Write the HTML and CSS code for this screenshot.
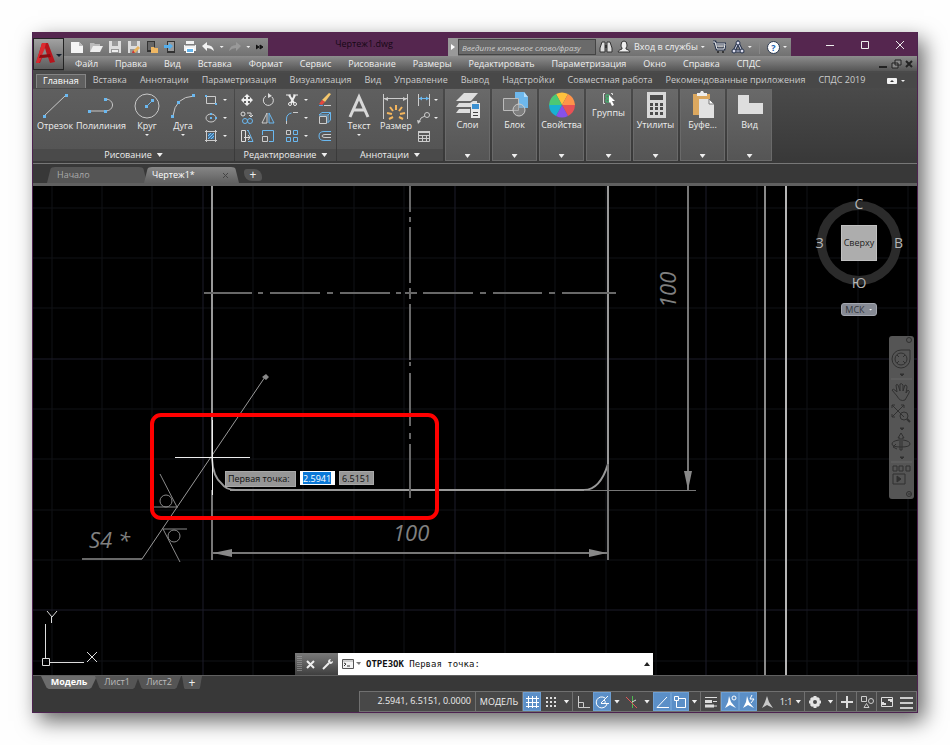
FILE: index.html
```html
<!DOCTYPE html>
<html lang="ru">
<head>
<meta charset="utf-8">
<title>Чертеж1.dwg</title>
<link rel="stylesheet" href="styles.css">
</head>
<body>
<div class="window">
  <header class="top">
    <button class="app-btn" aria-label="Меню приложения">
      <svg width="29" height="29" viewBox="0 0 29 29"><path d="M2 23 8 3h6l7 19-5 1-2-6-6 1-2 5z" fill="#b8141c"/><path d="M8 3h4l-3 12-4 8H2z" fill="#dc2a30"/><path d="M11 8 8 15h5z" fill="#8a8a8a"/><path d="m6 15 10-1 1 3-12 1z" fill="#8c0d12"/><path d="M22 14h6l-3 3z" fill="#16202e"/></svg>
    </button>
    <div class="titlebar">
      <div class="quick">
        <button aria-label="Создать"><svg width="16" height="14" viewBox="0 0 16 14"><path d="M2 2h8l4 4v7H2z" fill="#f5f5f5"/><path d="M10 2v4h4" fill="#bbb"/></svg></button>
        <button aria-label="Открыть"><svg width="16" height="14" viewBox="0 0 16 14"><path d="M2 12V3h4l1 1h5v2" fill="#bbb"/><path d="M2 12 5 6h10l-3 6z" fill="#eee"/></svg></button>
        <button aria-label="Сохранить"><svg width="16" height="14" viewBox="0 0 16 14"><path d="M2 1h12v12H2z" fill="#ddd"/><path d="M5 1h6v5H5zM4 9h8v4H4z" fill="#999"/><path d="M5 10h6v2H5z" fill="#eee"/></svg></button>
        <button aria-label="Сохранить как"><svg width="16" height="14" viewBox="0 0 16 14"><path d="M2 1h12v12H2z" fill="#ddd"/><path d="M5 1h6v5H5zM4 9h8v4H4z" fill="#999"/><path d="m7 11 5-5 2 2-5 5H7z" fill="#e9b45c"/><path d="m7 10 2 3H6z" fill="#c33"/></svg></button>
        <button aria-label="Открыть с устройства"><svg width="16" height="14" viewBox="0 0 16 14"><path d="M3 1h8v11H3z" fill="#333"/><path d="M4 2h6v8H4z" fill="#666"/><path d="M7 13V7h3l1 1h3v5z" fill="#efb763"/></svg></button>
        <button aria-label="Сохранить на устройство"><svg width="16" height="14" viewBox="0 0 16 14"><path d="M4 1h8v12H4z" fill="#333"/><path d="M5 2h6v9H5z" fill="#999"/><path d="M1 5h5V3l4 3-4 4V8H1z" fill="#55b0ee"/></svg></button>
        <button aria-label="Печать"><svg width="16" height="14" viewBox="0 0 16 14"><path d="M4 1h8v3H4zM2 5h12v6H2z" fill="#f1f1f1"/><path d="M4 8h8v5H4z" fill="#fff"/><path d="M5 9h6v3H5z" fill="#64b4ea"/><path d="M3 5h10" stroke="#777"/></svg></button>
        <button aria-label="Отменить"><svg width="16" height="14" viewBox="0 0 16 14"><path d="m2 6 5-4v3q6 0 7 6-3-3-7-3v3z" fill="#f2f2f2"/></svg></button>
        <button class="narrow" aria-label="Список отмены"><i class="caret"></i></button>
        <button aria-label="Повторить"><svg width="16" height="14" viewBox="0 0 16 14"><path d="M14 6 9 2v3Q3 5 2 11q3-3 7-3v3z" fill="#999"/></svg></button>
        <button class="narrow" aria-label="Список повтора"><i class="caret"></i></button>
        <button class="narrow" aria-label="Ещё"><svg width="8" height="8" viewBox="0 0 8 8"><path d="m0 2 3 2-3 2zM4 2l3 2-3 2z" fill="#111" stroke="#111"/></svg></button>
      </div>
      <h1>Чертеж1.dwg</h1>
      <div class="info">
        <button class="expand" aria-label="Развернуть"><svg width="6" height="8" viewBox="0 0 6 8"><path d="m1 1 4 3-4 3z" fill="#fff"/></svg></button>
        <input class="search" type="text" placeholder="Введите ключевое слово/фразу" aria-label="Поиск">
        <button class="tool" aria-label="Найти"><svg width="14" height="14" viewBox="0 0 14 14"><path d="M3 2h3v10H1V8zM8 2h3l2 6v4H8z" fill="#ddd" stroke="#333"/><path d="M6 5h2v3H6z" fill="#333"/></svg></button>
        <button class="login"><svg width="14" height="14" viewBox="0 0 14 14"><path d="M7 1q3 0 3 4 0 2-1 3v1q4 1 4 3H1q0-2 4-3V8Q4 7 4 5q0-4 3-4z" fill="#eee" stroke="#333"/></svg><span>Вход в службы</span><i class="caret"></i></button>
        <button class="tool" aria-label="Корзина"><svg width="14" height="14" viewBox="0 0 14 14"><path d="M1 2h2l2 7h7l1-5H4" fill="none" stroke="#26334c" stroke-width="3"/><path d="M1 2h2l2 7h7l1-5H4M4 6h8" fill="none" stroke="#eee"/><circle cx="6" cy="12" r="1" fill="#222"/><circle cx="11" cy="12" r="1" fill="#222"/></svg></button>
        <button class="login" aria-label="Приложения"><svg width="14" height="14" viewBox="0 0 14 14"><path d="M7 3 3 11h8z" fill="none" stroke="#26334c" stroke-width="3"/><path d="M7 3 3 11h8z" fill="none" stroke="#dde"/><circle cx="7" cy="3" r="2" fill="#dde" stroke="#26334c"/><circle cx="3" cy="11" r="2" fill="#dde" stroke="#26334c"/><circle cx="11" cy="11" r="2" fill="#dde" stroke="#26334c"/></svg><i class="caret"></i></button>
        <button class="login help" aria-label="Справка"><span class="q">?</span><i class="caret"></i></button>
      </div>
      <div class="winbtns">
        <button aria-label="Свернуть"><svg width="10" height="10" viewBox="0 0 10 10"><path d="M1 5.500h8" stroke="#eee"/></svg></button>
        <button aria-label="Развернуть окно"><svg width="10" height="10" viewBox="0 0 10 10"><path d="M1.500 1.500h7v7h-7z" fill="none" stroke="#eee"/></svg></button>
        <button aria-label="Закрыть"><svg width="10" height="10" viewBox="0 0 10 10"><path d="m1 1 8 8M9 1 1 9" stroke="#eee"/></svg></button>
      </div>
    </div>
    <nav class="menubar">
      <a href="#">Файл</a><a href="#">Правка</a><a href="#">Вид</a><a href="#">Вставка</a><a href="#">Формат</a><a href="#">Сервис</a><a href="#">Рисование</a><a href="#">Размеры</a><a href="#">Редактировать</a><a href="#">Параметризация</a><a href="#">Окно</a><a href="#">Справка</a><a href="#">СПДС</a>
      <div class="docbtns">
        <svg width="34" height="10" viewBox="0 0 34 10"><path d="M0 8h8" stroke="#222" stroke-width="2"/><path d="M16 1h6v5h-6zM13 4h6v5h-6z" fill="#888" stroke="#222"/><path d="m27 2 6 6M33 2l-6 6" stroke="#222" stroke-width="2"/></svg>
      </div>
    </nav>
  </header>

  <nav class="tabs">
    <a href="#" class="active">Главная</a><a href="#">Вставка</a><a href="#">Аннотации</a><a href="#">Параметризация</a><a href="#">Визуализация</a><a href="#">Вид</a><a href="#">Управление</a><a href="#">Вывод</a><a href="#">Надстройки</a><a href="#">Совместная работа</a><a href="#">Рекомендованные приложения</a><a href="#">СПДС 2019</a>
    <button class="ribbon-toggle" aria-label="Свернуть ленту"><svg width="18" height="8" viewBox="0 0 18 8"><rect y="1" width="10" height="6" rx="1" fill="#f2f2f2"/><path d="m3 5 2-2 2 2z" fill="#333"/><path d="M14 3h4l-2 2z" fill="#eee"/></svg></button>
  </nav>

  <section class="ribbon">
    <div class="panel">
      <div class="tools">
        <button class="big w40"><svg width="28" height="28" viewBox="0 0 28 28"><path d="M3 24 25 3" stroke="#c8c8c8"/><path d="M2 23h3v3H2zM24 2h3v3h-3z" fill="#6ab8f0"/></svg><span>Отрезок</span></button>
        <button class="big w52"><svg width="28" height="28" viewBox="0 0 28 28"><path d="M3 19h15c10 0 10-12 0-12" fill="none" stroke="#c8c8c8"/><path d="M1 18h3v3H1zM17 18h3v3h-3zM17 6h3v3h-3z" fill="#6ab8f0"/></svg><span>Полилиния</span></button>
        <button class="big w40"><svg width="28" height="28" viewBox="0 0 28 28"><circle cx="14" cy="14" r="12" fill="none" stroke="#c8c8c8"/><path d="m14 14 6-6" stroke="#6ab8f0"/><path d="M12 13h3v3h-3zM18 7h3v3h-3z" fill="#6ab8f0"/></svg><span>Круг</span><i class="caret"></i></button>
        <button class="big w32"><svg width="28" height="28" viewBox="0 0 28 28"><path d="M4 24Q6 5 25 4" fill="none" stroke="#c8c8c8"/><path d="M2 23h3v3H2zM8 9h3v3H8zM23 2h3v3h-3z" fill="#6ab8f0"/></svg><span>Дуга</span><i class="caret"></i></button>
        <div class="small draw-grid">
          <button aria-label="Прямоугольник"><svg width="16" height="16" viewBox="0 0 16 16"><path d="M3.500 4.500h9v7h-9z" fill="none" stroke="#ccc"/><path d="M2 3h2v2H2zM12 11h2v2h-2z" fill="#6ab8f0"/></svg></button><i class="caret"></i>
          <button aria-label="Эллипс"><svg width="16" height="16" viewBox="0 0 16 16"><ellipse cx="8" cy="8" rx="5" ry="4" fill="none" stroke="#ccc"/><path d="M7 7h2v2H7zM12 7h2v2h-2zM7 3h2v2H7z" fill="#6ab8f0"/></svg></button><i class="caret"></i>
          <button aria-label="Штриховка"><svg width="16" height="16" viewBox="0 0 16 16"><path d="M3.500 2v12M12.500 2v12M2 3.500h12M2 12.500h12" stroke="#ccc"/><path d="M5 5h6v6H5z" fill="#3f78a8"/><path d="m5 8 3-3M5 11l6-6M8 11l3-3" stroke="#7cc0f2"/></svg></button><i class="caret"></i>
        </div>
      </div>
      <button class="ptitle">Рисование<i class="caret wide"></i></button>
    </div>
    <div class="panel">
      <div class="tools">
        <div class="small edit-grid">
          <button aria-label="Перенести"><svg width="16" height="16" viewBox="0 0 16 16"><path d="M8 4v8M4 8h8" stroke="#eee" stroke-width="2"/><path d="m8 2 3 3H5zM8 14l3-3H5zM2 8l3-3v6zM14 8l-3-3v6z" fill="#eee"/></svg></button>
          <button aria-label="Повернуть"><svg width="16" height="16" viewBox="0 0 16 16"><path d="M6 4a5 5 0 1 0 6 1" fill="none" stroke="#ddd"/><path d="M8 1v5l4-2z" fill="#ddd"/></svg></button>
          <button aria-label="Обрезать"><svg width="16" height="16" viewBox="0 0 16 16"><path d="M2 3h12" stroke="#eee" stroke-dasharray="5 2"/><path d="m5 3 5 8M11 3l-4 8" stroke="#eee" stroke-width="2"/><circle cx="6" cy="12" r="1.500" fill="none" stroke="#eee"/><circle cx="11" cy="12" r="1.500" fill="none" stroke="#eee"/></svg></button><i class="caret"></i>
          <button aria-label="Стереть"><svg width="16" height="16" viewBox="0 0 16 16"><path d="m5 8 7-7 2 1-6 8z" fill="#f5c76c"/><path d="m5 8 3 2-3 3-3-1z" fill="#e4483f"/><path d="M2 13.500h4" stroke="#4fa0e0"/><path d="M7 13.500h7" stroke="#ccc"/></svg></button>
          <button aria-label="Копировать"><svg width="16" height="16" viewBox="0 0 16 16"><circle cx="4" cy="4" r="2" fill="none" stroke="#ddd"/><path d="M8 3h4v3M10 5l2 2 2-2" fill="none" stroke="#ddd"/><circle cx="6" cy="11" r="2.500" fill="none" stroke="#6ab8f0"/><circle cx="11" cy="11" r="2.500" fill="none" stroke="#6ab8f0"/></svg></button>
          <button aria-label="Зеркало"><svg width="16" height="16" viewBox="0 0 16 16"><path d="M7 3v10H2z" fill="none" stroke="#ccc"/><path d="M9 3v10h5z" fill="none" stroke="#6ab8f0"/></svg></button>
          <button aria-label="Сопряжение"><svg width="16" height="16" viewBox="0 0 16 16"><path d="M2.500 14V9q0-5 5-6" fill="none" stroke="#6ab8f0"/><path d="M9 2.500h5M2.500 11v3" stroke="#ccc"/></svg></button><i class="caret"></i>
          <button aria-label="Расчленить"><svg width="16" height="16" viewBox="0 0 16 16"><path d="M2.500 6.500h7v7h-7z" fill="none" stroke="#ccc"/><path d="m2 5 3-2.500h8.500V10L11 12.500M11 5l2.500-2.500M2 5h9v8" fill="none" stroke="#6ab8f0"/></svg></button>
          <button aria-label="Растянуть"><svg width="16" height="16" viewBox="0 0 16 16"><path d="M2.500 2.500h4v11h-4z" fill="none" stroke="#ddd"/><path d="m8 3 1-1 5 11.500H9" fill="none" stroke="#6ab8f0"/><path d="M5 9.500h6M9 7l2 2.500L9 12" fill="none" stroke="#ddd"/></svg></button>
          <button aria-label="Масштаб"><svg width="16" height="16" viewBox="0 0 16 16"><path d="M2.500 7V2.500h11v11H9" fill="none" stroke="#6ab8f0"/><path d="M2.500 8.500h5v5h-5z" fill="none" stroke="#ccc"/></svg></button>
          <button aria-label="Массив"><svg width="16" height="16" viewBox="0 0 16 16"><path d="M2.500 2.500h4v4h-4z" fill="none" stroke="#ccc"/><path d="M9.500 2.500h4v4h-4zM2.500 9.500h4v4h-4zM9.500 9.500h4v4h-4z" fill="none" stroke="#6ab8f0"/></svg></button><i class="caret"></i>
          <button aria-label="Подобие"><svg width="16" height="16" viewBox="0 0 16 16"><path d="M14 3.500H7q-5 0-5 4.500t5 4.500h7" fill="none" stroke="#6ab8f0"/><path d="M14 6.500H8q-3 0-3 1.500t3 1.500h6" fill="none" stroke="#ccc"/></svg></button>
        </div>
      </div>
      <button class="ptitle">Редактирование<i class="caret wide"></i></button>
    </div>
    <div class="panel">
      <div class="tools">
        <button class="big w40"><svg width="28" height="28" viewBox="0 0 28 28"><path d="m5 25 9-20 9 20M9 18h10" fill="none" stroke="#d8d8d8" stroke-width="3"/></svg><span>Текст</span><i class="caret"></i></button>
        <button class="big w34"><svg width="28" height="28" viewBox="0 0 28 28"><path d="M1.500 2v25M25.500 2v25M2 6.500h24" stroke="#ccc"/><path d="m2 7 4-2v4zM25 7l-4-2v4z" fill="#ccc"/><path d="M14 13v5M8 15l3 4M20 15l-3 4M5 21l5 1M23 21l-5 1M7 27l4-2M21 27l-4-2" stroke="#f3b55d" stroke-width="2"/></svg><span>Размер</span></button>
        <div class="small anno-grid">
          <button aria-label="Линейный размер"><svg width="16" height="16" viewBox="0 0 16 16"><path d="M2.500 2v12M13.500 2v12" stroke="#ccc"/><path d="M3 6.500h10" stroke="#6ab8f0"/><path d="m3 6.500 3-2v4zM13 6.500l-3-2v4z" fill="#6ab8f0"/></svg></button><i class="caret"></i>
          <button aria-label="Выноска"><svg width="16" height="16" viewBox="0 0 16 16"><path d="M3 12q1-5 6-6" fill="none" stroke="#ccc"/><circle cx="11" cy="5" r="2.500" fill="none" stroke="#ccc"/><path d="m1 10 4 1-3 3z" fill="#ccc"/></svg></button><i class="caret"></i>
          <button aria-label="Таблица"><svg width="16" height="16" viewBox="0 0 16 16"><path d="M2.500 3.500h11v10h-11z" fill="none" stroke="#ccc"/><path d="M2 4h12" stroke="#ccc" stroke-width="2"/><path d="M2 7.500h12M2 10.500h12M6.500 7v7M10.500 7v7" stroke="#ccc"/></svg></button>
        </div>
      </div>
      <button class="ptitle">Аннотации<i class="caret wide"></i></button>
    </div>
    <button class="fold"><svg width="28" height="28" viewBox="0 0 28 28"><path d="m2 10 8-8h14l-7 8zM2 16l3-4h11l3-2h4v2l-5 4zM2 22l3-4h11v4z" fill="#dedede"/><path d="M17 12h9v15h-9z" fill="#e8e8e8"/><path d="M18 13h7v5h-7z" fill="#3c90d0"/><path d="M19 21.500h5M19 24.500h5" stroke="#444"/></svg><span>Слои</span><i class="caret wide"></i></button>
    <button class="fold"><svg width="28" height="28" viewBox="0 0 28 28"><path d="M14 1h9l4 5v11H14z" fill="#6db7ec"/><path d="M23 1v5h4" fill="#b4dcf8"/><path d="M2.500 7.500h15v12h-15z" fill="#777" stroke="#bbb"/><circle cx="18" cy="19" r="6" fill="#999" fill-opacity=".5" stroke="#ccc"/></svg><span>Блок</span><i class="caret wide"></i></button>
    <button class="fold"><svg width="28" height="28" viewBox="0 0 28 28"><path d="M14 14 8 3a13 13 0 0 1 12 0z" fill="#ffc13d"/><path d="M14 14 20 3a13 13 0 0 1 7 11z" fill="#ff934a"/><path d="M14 14h13a13 13 0 0 1-7 11z" fill="#e95155"/><path d="m14 14 6 11a13 13 0 0 1-12 0z" fill="#8751e8"/><path d="M14 14 8 25A13 13 0 0 1 1 14z" fill="#18b1d2"/><path d="M14 14H1A13 13 0 0 1 8 3z" fill="#4cc875"/></svg><span>Свойства</span><i class="caret wide"></i></button>
    <button class="fold"><svg width="16" height="16" viewBox="0 0 16 16"><path d="M4 2.500H2.500v10H4M10 2.500h1.500V4" fill="none" stroke="#ddd"/><path d="M5 4h3v3H5zM5 8h3v3H5z" fill="none" stroke="#3fbf70"/><path d="m8 4 6 6h-3l2 4-2 1-2-4-1 1z" fill="#fff"/></svg><span>Группы</span><i class="caret wide"></i></button>
    <button class="fold"><svg width="28" height="28" viewBox="0 0 28 28"><path d="M5 1h19v26H5z" fill="#d9d9d9"/><path d="M8 4h13v5H8zM8 12h3v3H8zM13 12h3v3h-3zM18 12h3v3h-3zM8 16h3v3H8zM13 16h3v3h-3zM18 16h3v3h-3zM8 21h3v3H8zM13 21h3v3h-3zM18 21h3v3h-3z" fill="#4b4b4b"/></svg><span>Утилиты</span><i class="caret wide"></i></button>
    <button class="fold"><svg width="28" height="28" viewBox="0 0 28 28"><path d="M4 3h17v21H4z" fill="#dca85f"/><path d="M8 5V2h3l1-2h2l1 2h3v3z" fill="#eee"/><path d="M10 8h10l5 5v14H10z" fill="#e2e2e2"/><path d="M20 8v5h5z" fill="#fff" stroke="#777"/></svg><span>Буфе...</span><i class="caret wide"></i></button>
    <button class="fold"><svg width="28" height="28" viewBox="0 0 28 28"><path d="M2 4h11v8h14v11H2z" fill="#dedede"/></svg><span>Вид</span><i class="caret wide"></i></button>
  </section>

  <nav class="files">
    <a href="#" class="file">Начало</a>
    <a href="#" class="file current">Чертеж1*<svg width="7" height="7" viewBox="0 0 7 7"><path d="m1 1 5 5M6 1 1 6" stroke="#444"/></svg></a>
    <button class="plus" aria-label="Новый чертеж">+</button>
  </nav>

  <main class="canvas">
    <svg class="drawing" width="100%" height="100%" aria-hidden="true">
      <g transform="translate(-33 -186)" fill="none">
        <path d="M52 186v489M102 186v489M152 186v489M253 186v489M303 186v489M354 186v489M404 186v489M505 186v489M555 186v489M606 186v489M656 186v489M757 186v489M807 186v489M858 186v489M908 186v489M33 208h884M33 258h884M33 308h884M33 409h884M33 459h884M33 510h884M33 560h884M33 661h884" stroke="#111317"/>
        <path d="M203 186v489M455 186v489M706 186v489M33 359h884M33 610h884" stroke="#1c1c2a"/>
        <g stroke="#999" stroke-width="2">
          <path d="M212 186v273q1 18 10 25 4 6 14 6M230 490h354q16 0 24-26V186"/>
        </g>
        <g stroke="#777" stroke-width="2">
          <path d="M212 490v70M608 464v96M212 553h396M688 186v304"/>
          <path d="M584 490.500h112" stroke-width="1"/>
          <path d="M765 186v489" stroke="#8a8a8a"/>
          <path d="M786 186v489" stroke="#b5b5b5"/>
        </g>
        <g stroke="#686868" stroke-width="2">
          <path d="M410 186v26M410 217v5M410 227v56M410 288v11M410 304v56M410 362v4M410 373v53M410 433v6M410 444v54"/>
          <path d="M204 293h48M258 293h5M270 293h50M327 293h6M340 293h50M396 293h5M405 293h12M423 293h50M480 293h6M493 293h49M549 293h6M562 293h54"/>
          <path d="M142 559 265 377" stroke-width="1" stroke="#999"/>
          <path d="M82 559h60"/>
        </g>
        <g stroke="#8a8a8a">
          <path d="m160 474 17 33M154 507h24M163 529h24M163 529l17 33"/>
          <circle cx="166" cy="501" r="6"/><circle cx="174" cy="536" r="6"/>
        </g>
        <path d="m262 377 4-3 3 3-3 3zM213 553l19-4v8zM607 553l-18-4v8zM688 490l-4-19h8z" fill="#888"/>
        <text class="dim" x="393" y="541">100</text>
        <text class="dim" transform="translate(676 308) rotate(-90)">100</text>
        <text class="dim" x="89" y="548">S4 *</text>
        <path d="M175 457.500h75M212.500 420v75" stroke="#eee"/>
        <rect x="152" y="415" width="285" height="103" rx="9" stroke="#f00" stroke-width="4"/>
        <path d="M45.500 624v34M49 662.500h35M42.500 658.500h7v7h-7z" stroke="#ddd"/>
        <path d="m47 611 5 6 5-6M51.500 617v6M87 652l10 10M97 652l-10 10" stroke="#ddd"/>
      </g>
    </svg>

    <div class="prompt">
      <label for="px">Первая точка:</label>
      <input id="px" class="x" type="text" value="2.5941">
      <input class="y" type="text" value="6.5151" aria-label="Y">
    </div>

    <div class="side">
      <div class="compass">
        <span class="n">С</span><span class="w">З</span><button class="cube">Сверху</button><span class="e">В</span><span class="s">Ю</span>
      </div>
      <button class="ucs">МСК<i class="caret"></i></button>
    </div>
    <button class="navbar" aria-label="Панель навигации">
      <svg width="25" height="163" viewBox="0 0 25 163" fill="none" stroke="#303030"><circle cx="20" cy="4" r="2.500"/><path d="M12 14h9v9a9 9 0 1 1-9-9z"/><circle cx="12" cy="23" r="6"/><path d="m8 19 2 2M16 19l-2 2M8 27l2-2M16 27l-2-2"/><path d="M11 38h4l-2 2z" fill="#303030"/><path d="M2 43h21" stroke="#666"/><path d="M8 60 3 54q1-2 4 1l1 1-1-7q2-2 3 3l1 3V48q2-1 3 1v6l2-6q2 0 2 2l-1 6 2-3q2 1 1 3l-4 7q-5 2-8-4z"/><path d="m3 69 12 12M15 69 3 81M3 72v-3h3M12 69h3v3M3 78v3h3"/><circle cx="15" cy="80" r="4"/><path d="m18 83 3 3" stroke-width="2"/><path d="M11 92h4l-2 2z" fill="#303030"/><path d="M11 114v-12H9l3-5 3 5h-2v12z"/><path d="M10 104q-7 1-7 4t9 3 9-3-7-4M7 108l-3 3 4 2"/><path d="M11 121h4l-2 2z" fill="#303030"/><path d="M2 126h21" stroke="#666"/><path d="M4 130h4v5H4zM10 130h4v5h-4zM17 130h4v5h-4zM4 138h12v10H4z"/><path d="m8 140 4 3-4 3z" fill="#303030"/><circle cx="20" cy="158" r="2.500"/><path d="M19 158h3"/></svg>
    </button>

    <div class="command">
      <div class="grip"></div>
      <button aria-label="Закрыть"><svg width="9" height="9" viewBox="0 0 9 9"><path d="m1 1 7 7M8 1 1 8" stroke="#eee" stroke-width="2"/></svg></button>
      <button aria-label="Настройка"><svg width="12" height="12" viewBox="0 0 12 12"><path d="m1 11 6-6" stroke="#eee" stroke-width="2"/><path d="M9 1Q6 1 6 4l2 2q3 0 3-3L9 4 8 3z" fill="#eee"/></svg></button>
      <div class="cmdline">
        <svg width="20" height="12" viewBox="0 0 20 12"><path d="M1.500 1.500h11v9h-11z" fill="#f4f4f4" stroke="#555"/><path d="M2 3h10" stroke="#aaa"/><path d="m3 5 2 1-2 2M6 8h3" fill="none" stroke="#333"/><path d="M15 4h5l-2 3z" fill="#777"/></svg>
        <p><b>ОТРЕЗОК</b> Первая точка:</p>
        <svg width="6" height="4" viewBox="0 0 6 4"><path d="M0 4h6L3 0z" fill="#222"/></svg>
      </div>
    </div>
  </main>

  <footer>
    <nav class="sheets">
      <a href="#" class="sheet current">Модель</a><a href="#" class="sheet">Лист1</a><a href="#" class="sheet">Лист2</a><button class="sheet add" aria-label="Новый лист">+</button>
    </nav>
    <div class="status">
      <span class="coords">2.5941, 6.5151, 0.0000</span>
      <button class="model">МОДЕЛЬ</button>
      <button class="on" aria-label="Сетка"><svg width="16" height="16" viewBox="0 0 16 16"><path d="M4.500 2v12M8.500 2v12M12.500 2v12M2 4.500h13M2 8.500h13M2 12.500h13" stroke="#fff"/></svg></button>
      <button class="roomy" aria-label="Шаг"><svg width="16" height="16" viewBox="0 0 16 16"><path d="M3 4h10M3 8h10M3 12h10" stroke="#ddd" stroke-width="2" stroke-dasharray="2 2"/></svg></button>
      <button class="drop end" aria-label="Параметры шага"><i class="caret wide"></i></button>
      <button class="roomy" aria-label="Орто"><svg width="16" height="16" viewBox="0 0 16 16"><path d="M3.500 2v11.500H15M4 8.500h4.500V13" fill="none" stroke="#ccc"/></svg></button>
      <button class="on" aria-label="Полярное отслеживание"><svg width="16" height="16" viewBox="0 0 16 16"><path d="M11 4a5.500 5.500 0 1 0 2 6M7 9l7-7M7 9.500h8" fill="none" stroke="#fff"/><path d="M10 6q2 1 1 3" fill="none" stroke="#fff"/></svg></button>
      <button class="drop" aria-label="Углы"><i class="caret wide"></i></button>
      <button aria-label="Изометрия"><svg width="16" height="16" viewBox="0 0 16 16"><path d="M8.500 2v12" stroke="#50b850"/><path d="m2 3 11 11" stroke="#e05858"/><path d="m8 8 4-2" stroke="#ddd"/></svg></button>
      <button class="drop" aria-label="Плоскости"><i class="caret wide"></i></button>
      <button class="on" aria-label="Отслеживание"><svg width="16" height="16" viewBox="0 0 16 16"><path d="m13 3-10 10.500h12" fill="none" stroke="#fff"/></svg></button>
      <button class="on" aria-label="Привязка"><svg width="16" height="16" viewBox="0 0 16 16"><path d="M4.500 4.500h9v9h-9z" fill="none" stroke="#fff"/><path d="M2.500 2.500h4v4h-4z" fill="#5b8fc7" stroke="#fff"/></svg></button>
      <button class="drop end" aria-label="Режимы привязки"><i class="caret wide"></i></button>
      <button class="roomy end" aria-label="Вес линий"><svg width="16" height="16" viewBox="0 0 16 16"><path d="M2 3.500h12" stroke="#ddd"/><path d="M2 7.500h7M2 12h9" stroke="#ddd" stroke-width="3"/><path d="M10 7.500h4M10 12h4" stroke="#ddd"/></svg></button>
      <button class="on" aria-label="Видимость аннотаций"><svg width="16" height="16" viewBox="0 0 16 16"><path d="m7 2 2 6 5 6-6-3-5 3 3-6z" fill="#fff"/><circle cx="12" cy="4" r="2" fill="none" stroke="#fff"/></svg></button>
      <button class="on" aria-label="Автомасштаб"><svg width="16" height="16" viewBox="0 0 16 16"><path d="m7 2 2 6 5 6-6-3-5 3 3-6z" fill="#fff"/><path d="m12 1-2 4h4l-3 4" fill="none" stroke="#fff"/></svg></button>
      <button class="roomy" aria-label="Масштаб аннотаций"><svg width="16" height="16" viewBox="0 0 16 16"><path d="m8 2 2 6 4 6-6-3-5 3 3-6z" fill="#c8c8c8"/></svg></button>
      <button class="scale end">1:1<i class="caret wide"></i></button>
      <button class="roomy" aria-label="Рабочее пространство"><svg width="16" height="16" viewBox="0 0 16 16"><circle cx="8" cy="8" r="3.500" fill="none" stroke="#e2e2e2" stroke-width="3"/><path d="M8 2v2M8 12v2M2 8h2M12 8h2M4 4l1 1M11 11l1 1M4 12l1-1M11 5l1-1" stroke="#e2e2e2" stroke-width="3"/></svg></button>
      <button class="drop end" aria-label="Выбор пространства"><i class="caret wide"></i></button>
      <button class="roomy end" aria-label="Монитор"><svg width="16" height="16" viewBox="0 0 16 16"><path d="M8 2v12M2 8h12" stroke="#ddd" stroke-width="2"/></svg></button>
      <button class="roomy end" aria-label="Изоляция объектов"><svg width="16" height="16" viewBox="0 0 16 16"><path d="M2.500 2.500h5v5h-5zM5 13.500h5l-2.500-4z" fill="none" stroke="#ccc"/><circle cx="12" cy="7" r="2.500" fill="none" stroke="#ccc"/></svg></button>
      <button class="roomy" aria-label="Полный экран"><svg width="16" height="16" viewBox="0 0 16 16"><path d="M2.500 3.500h11v9h-11z" fill="none" stroke="#ddd"/><path d="M9 6h3v2M4 8v2h3" fill="none" stroke="#ddd" stroke-width="2"/></svg></button>
      <button aria-label="Настройка панели"><svg width="16" height="16" viewBox="0 0 16 16"><path d="M2 4h13M2 9h13M2 14h13" stroke="#ccc" stroke-width="2"/></svg></button>
    </div>
  </footer>
</div>
</body>
</html>
```
FILE: styles.css
```css
* { box-sizing: border-box; }

body {
  margin: 0;
  padding: 32px;
  min-height: 100vh;
  display: flex;
  background: #fefefe;
  color: #eee;
  font: 9px/12px "Open Sans", "Noto Sans", sans-serif;
}

a { color: inherit; text-decoration: none; white-space: nowrap; }
h1, p { margin: 0; }
svg { display: block; flex: none; }

button {
  display: flex;
  align-items: center;
  justify-content: center;
  padding: 0;
  border: 0;
  background: none;
  color: inherit;
  font: inherit;
  white-space: nowrap;
}

input { min-width: 0; padding: 0; border: 0; border-radius: 0; font: inherit; }

.caret {
  width: 4px;
  height: 2px;
  flex: none;
  background: #eee;
  clip-path: polygon(0 0, 100% 0, 50% 100%);
}
.caret.wide { width: 6px; height: 4px; }

.window {
  flex: 1;
  min-width: 0;
  display: flex;
  flex-direction: column;
  border: 1px solid #4d2350;
  border-top: 0;
  background: #383838;
  box-shadow: 6px 8px 20px rgba(0, 0, 0, .6);
}

/* title and menu */
.top {
  display: grid;
  grid-template-columns: 31px 1fr;
  grid-template-rows: 24px 17px;
  background: linear-gradient(#55264f 0 24px, #4a4a4a 24px);
}
.app-btn {
  grid-row: 1 / 3;
  margin: 6px 0 3px;
  border: 1px solid #222;
  background: linear-gradient(#a2a2a2, #5c5c5c);
}
.titlebar { display: flex; align-items: flex-end; min-width: 0; }
.quick, .info {
  display: flex;
  align-items: center;
  height: 18px;
  background: linear-gradient(#8c8c8c, #717171);
  flex: none;
}
.quick { width: 204px; padding-left: 4px; }
.quick button { width: 19px; }
.quick .narrow { width: 8px; }
.quick .narrow:last-child { width: 16px; }
h1 {
  flex: 1;
  height: 18px;
  padding-left: 12px;
  text-align: center;
  font-size: 9px;
  font-weight: 400;
  color: #150815;
}
.info { width: 343px; color: #f0f0f0; }
.expand { width: 10px; height: 18px; background: #999; }
.search {
  width: 138px;
  height: 16px;
  padding-left: 3px;
  border: 1px solid #444;
  background: #6a6a6a;
  color: #ddd;
  font-size: 8px;
}
.search::placeholder { color: #d0d0d0; font-style: italic; opacity: 1; }
.tool { width: 19px; }
.login { gap: 3px; padding: 0 2px; }
.login + .tool { margin-left: 3px; }
.help { margin-left: auto; margin-right: 2px; padding-left: 7px; border-left: 1px solid #888; }
.q {
  width: 13px;
  height: 13px;
  border: 1px solid #2a3850;
  border-radius: 50%;
  background: #fff;
  color: #1560b0;
  font-weight: 700;
  line-height: 11px;
}
.winbtns { display: flex; height: 22px; margin-left: 21px; flex: none; }
.winbtns button { width: 35px; }

.menubar {
  display: flex;
  align-items: center;
  gap: 17px;
  padding-left: 11px;
  height: 15px;
  background: linear-gradient(#8d8d8d, #555);
}
.docbtns { margin-left: auto; margin-right: 4px; }

.tabs {
  display: flex;
  align-items: flex-end;
  gap: 13px;
  height: 15px;
  padding-left: 3px;
  background: #484848;
  color: #ccc;
}
.tabs a { height: 14px; }
.tabs .active {
  padding: 0 6px;
  margin-right: -6px;
  border: 1px solid #858585;
  border-bottom: 0;
  background: #606060;
  color: #fff;
}
.ribbon-toggle { height: 14px; margin-left: auto; margin-right: 12px; }

/* ribbon */
.ribbon {
  display: flex;
  gap: 2px;
  height: 76px;
  padding: 1px 0 2px;
  border-bottom: 1px solid #777;
  background: linear-gradient(#4a4a4a, #383838);
}
.panel {
  display: flex;
  flex-direction: column;
  background: linear-gradient(#5f5f5f, #535353);
}
.panel + .panel { margin-left: -1px; }
.tools { display: flex; flex: 1; padding-left: 2px; }
.ptitle { height: 12px; gap: 5px; background: #4a4a4a; }
.big {
  flex-direction: column;
  justify-content: flex-start;
  align-self: flex-start;
  padding-top: 3px;
}
.big .caret { margin-top: 2px; }
.w32 { width: 32px; }
.w34 { width: 34px; }
.w40 { width: 40px; }
.w52 { width: 52px; }
.small {
  display: grid;
  grid-auto-rows: 18px;
  align-items: center;
  align-content: start;
  padding-top: 2px;
}
.draw-grid { grid-template-columns: 24px 11px; }
.edit-grid { grid-template-columns: 20px 22px 25px 9px 23px; }
.anno-grid { grid-template-columns: 21px 9px; }
.fold {
  width: 45px;
  flex-direction: column;
  justify-content: flex-start;
  padding: 1px 0 2px;
  background: linear-gradient(#696969, #555);
  border: 1px solid #6a6a6a;
}
.fold .caret { margin-top: auto; }

/* drawing tabs */
.files {
  display: flex;
  align-items: flex-end;
  height: 22px;
  padding-left: 14px;
  border-bottom: 3px solid #606060;
}
.file {
  width: 100px;
  height: 16px;
  padding: 2px 10px 0;
  background: #555;
  border-radius: 8px 8px 0 0;
  color: #aaa;
  clip-path: polygon(4px 0, calc(100% - 4px) 0, 100% 100%, 0 100%);
}
.current.file {
  display: flex;
  justify-content: space-between;
  width: 95px;
  margin-left: -3px;
  padding-left: 8px;
  background: linear-gradient(#868686, #606060);
  color: #fff;
}
.current.file svg { margin-top: 3px; }
.plus {
  width: 18px;
  height: 12px;
  margin: 0 0 2px 5px;
  border-radius: 3px 8px 3px 8px;
  background: #555;
  font-size: 12px;
}

/* model space */
.canvas { position: relative; flex: 1; min-height: 489px; background: #000; overflow: hidden; }
.drawing { position: absolute; inset: 0; }
.dim { fill: #808080; font: italic 22px "Liberation Sans Narrow", "Open Sans", sans-serif; }

.prompt { position: absolute; left: 192px; top: 285px; display: flex; gap: 4px; align-items: flex-start; color: #111; }
.prompt label { width: 71px; height: 16px; padding: 1px 2px; background: #969696; border: 1px solid #aaa; white-space: nowrap; }
.prompt input { width: 35px; height: 14px; }
.prompt .x { border: solid #fff; border-width: 1px 4px 1px 3px; background: #0a78d7; color: #fff; }
.prompt .y { padding-left: 2px; background: #969696; border: 1px solid #aaa; color: #111; }

.side {
  position: absolute;
  top: 15px;
  right: 16px;
  display: flex;
  flex-direction: column;
  align-items: center;
  gap: 18px;
}
.compass {
  width: 84px;
  height: 84px;
  display: grid;
  grid-template-columns: 1fr 36px 1fr;
  grid-template-rows: 1fr 36px 1fr;
  place-items: center;
  border: 9px solid #2b2b2b;
  border-radius: 50%;
  color: #b5b5b5;
  font-size: 14px;
  line-height: 16px;
}
.n { grid-column: 1 / 4; margin-top: -28px; }
.w { margin-left: -28px; }
.e { margin-right: -28px; }
.s { grid-column: 1 / 4; margin-bottom: -28px; }
.cube { width: 36px; height: 36px; background: #adadad; border: 1px solid #c0c0c0; color: #222; font-size: 9px; }
.ucs {
  width: 36px;
  height: 13px;
  gap: 4px;
  border: 1px solid #a4a7b0;
  border-radius: 3px;
  background: #868a94;
  color: #33363d;
}
.navbar {
  position: absolute;
  right: 3px;
  top: 150px;
  width: 25px;
  height: 163px;
  border-radius: 3px;
  background: #555;
}

.command {
  position: absolute;
  bottom: 0;
  left: 50%;
  display: flex;
  width: 358px;
  height: 22px;
  margin-left: -180px;
  background: linear-gradient(#7a7a7a, #3f3f3f);
}
.grip { width: 5px; margin: 3px 0 3px 2px; background: repeating-linear-gradient(#aaa 0 1px, transparent 1px 2px); opacity: .5; }
.command button { width: 17px; }
.cmdline {
  flex: 1;
  display: flex;
  align-items: center;
  gap: 5px;
  margin-left: 2px;
  padding: 0 3px;
  background: #fff;
  color: #111;
}
.cmdline p { flex: 1; font: 9px/12px "DejaVu Sans Mono", "Liberation Mono", monospace; }

/* layout tabs and status bar */
.sheets { display: flex; height: 16px; padding-left: 8px; border-top: 1px solid #606060; }
.sheet {
  width: 44px;
  height: 13px;
  margin-right: -2px;
  text-align: center;
  background: #555;
  color: #bbb;
  clip-path: polygon(0 0, 100% 0, 90% 90%, 86% 100%, 14% 100%, 10% 90%);
}
.current.sheet { width: 56px; background: #6c6c6c; color: #fff; font-weight: 700; }
.add.sheet { width: 20px; margin-left: 3px; font-size: 12px; color: #eee; }

.status {
  display: flex;
  width: max-content;
  margin-left: auto;
  height: 21px;
  padding-right: 1px;
  border: 1px solid #707070;
  background: #484848;
}
.status > * { height: 19px; flex: none; }
.status button { width: 18px; }
.status .on { background: #5b8fc7; border: 1px solid #6d9fd3; }
.status .roomy { width: 20px; }
.status .drop { width: 12px; }
.status .end { border-right: 1px solid #707070; }
.coords { width: 116px; padding: 3px 4px 0 0; text-align: right; border-right: 1px solid #707070; }
.status .model { width: 47px; border-right: 1px solid #707070; }
.status .scale { width: 28px; gap: 3px; }
```
